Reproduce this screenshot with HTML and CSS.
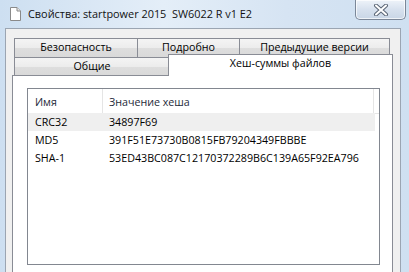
FILE: index.html
```html
<!DOCTYPE html>
<html>

<head>
    <meta charset="UTF-8">
    <title>Свойства</title>
    <link rel="stylesheet" href="styles.css">
</head>

<body>
    <div class="window">
        <!-- заголовок окна -->
        <div class="titlebar">
            <svg class="doc-icon" width="11" height="14" viewBox="0 0 11 14">
                <path d="M0.5 0.5 H7 L10.5 4 V13.5 H0.5 Z" fill="#fff" stroke="#8a8a8a" />
                <path d="M7 0.5 V4 H10.5" fill="#e6e6e6" stroke="#8a8a8a" />
            </svg>
            <span class="title">Свойства: startpower 2015&nbsp; SW6022 R v1 E2</span>
            <div class="close">
                <svg width="16" height="12" viewBox="0 0 16 12">
                    <path d="M3 1.5 L13 10.5 M13 1.5 L3 10.5" stroke="#5a6575" stroke-width="4" stroke-linecap="round" />
                    <path d="M3 1.5 L13 10.5 M13 1.5 L3 10.5" stroke="#fff" stroke-width="2" stroke-linecap="round" />
                </svg>
            </div>
        </div>
        <div class="client">
            <!-- вкладки -->
            <div class="tab-row">
                <div class="tab w1">Безопасность</div>
                <div class="tab w2">Подробно</div>
                <div class="tab w3 last">Предыдущие версии</div>
            </div>
            <div class="tab-row bottom">
                <div class="tab w4">Общие</div>
                <div class="tab active">Хеш-суммы файлов</div>
            </div>
            <div class="panel">
                <div class="list">
                    <div class="list-head">
                        <div class="col c1">Имя</div>
                        <div class="col c2">Значение хеша</div>
                        <div class="col c3"></div>
                    </div>
                    <div class="list-row sel">
                        <div class="col c1">CRC32</div>
                        <div class="col c2">34897F69</div>
                    </div>
                    <div class="list-row">
                        <div class="col c1">MD5</div>
                        <div class="col c2">391F51E73730B0815FB79204349FBBBE</div>
                    </div>
                    <div class="list-row">
                        <div class="col c1">SHA-1</div>
                        <div class="col c2">53ED43BC087C12170372289B6C139A65F92EA796</div>
                    </div>
                </div>
                <p class="note">Что такое хеш-сумма?</p>
            </div>
        </div>
    </div>
</body>

</html>
```

FILE: styles.css
```css
body {
    margin: 0;
    width: 409px;
    height: 272px;
    overflow: hidden;
    background: linear-gradient(90deg, #cddff1, #e4eef8 40%, #d6e4f3 70%, #cfe0f1);
    font-family: "Open Sans", "Liberation Sans", sans-serif;
    font-size: 10.7px;
    color: #000;
}

.window {
    display: flex;
    flex-direction: column;
    height: 272px;
}

.titlebar {
    display: flex;
    align-items: flex-start;
    height: 28px;
    flex-shrink: 0;
}

.doc-icon {
    margin: 7px 0 0 10px;
}

.title {
    margin: 6px 0 0 7px;
    font-size: 10.9px;
    line-height: 15px;
    color: #111;
}

.close {
    margin-left: auto;
    margin-right: 3px;
    width: 51px;
    height: 20px;
    box-sizing: border-box;
    border: 1px solid #7b8798;
    border-top: none;
    border-radius: 0 0 5px 5px;
    background: linear-gradient(#eef3f9, #d7e1ee 50%, #c9d6e6);
    display: flex;
    align-items: center;
    justify-content: center;
    box-shadow: inset 0 0 0 1px rgba(255, 255, 255, 0.7);
}

.client {
    flex: 1;
    margin-left: 5px;
    width: 396px;
    box-sizing: border-box;
    border: 1px solid #9ba5b2;
    border-bottom: none;
    background: #f0f0f0;
    padding: 9px 7px 0 6px;
    display: flex;
    flex-direction: column;
}

.tab-row {
    display: flex;
    margin-left: 2px;
    height: 18px;
}

.tab-row.bottom {
    height: 19px;
    align-items: flex-end;
}

.tab {
    box-sizing: border-box;
    height: 19px;
    border: 1px solid #898c95;
    border-right: none;
    border-bottom: none;
    background: linear-gradient(#f4f4f4, #ececec 50%, #dedede 51%, #d9d9d9);
    text-align: center;
    line-height: 17px;
    white-space: nowrap;
}

.tab.last {
    border-right: 1px solid #898c95;
}

.w1 {
    width: 123px;
}

.w2 {
    width: 102px;
}

.w3 {
    width: 151px;
}

.w4 {
    width: 156px;
    height: 18px;
    border-right: 1px solid #898c95;
}

.tab.active {
    position: relative;
    z-index: 1;
    width: 225px;
    height: 22px;
    margin-left: -2px;
    margin-bottom: -1px;
    border-right: 1px solid #898c95;
    background: #fff;
    line-height: 16px;
}

.panel {
    flex: 1;
    background: #fff;
    border: 1px solid #898c95;
    border-bottom: none;
    padding: 12px 12px 0 14px;
}

.list {
    height: 177px;
    box-sizing: border-box;
    border: 1px solid #828790;
}

.list-head {
    display: flex;
    height: 24px;
    border-bottom: 1px solid #e5e5e5;
    margin-bottom: -1px;
}

.list-head .col {
    line-height: 26px;
    color: #1e2a3a;
}

.list-head .c1 {
    border-right: 1px solid #e5e5e5;
}

.list-head .c3 {
    flex: 1;
    margin-right: 3px;
    border-left: 1px solid #e5e5e5;
    margin-left: 264px;
}

.list-row {
    display: flex;
    height: 18px;
    line-height: 19px;
    margin-right: 4px;
}

.list-row.sel {
    background: #efefef;
}

.col {
    white-space: nowrap;
}

.c1 {
    width: 75px;
    box-sizing: border-box;
    padding-left: 7px;
    flex-shrink: 0;
}

.c2 {
    padding-left: 6px;
}

.list-head .c2 {
    width: 0;
}

.note {
    margin: 5px 0 0 3px;
    line-height: 14px;
}
```
